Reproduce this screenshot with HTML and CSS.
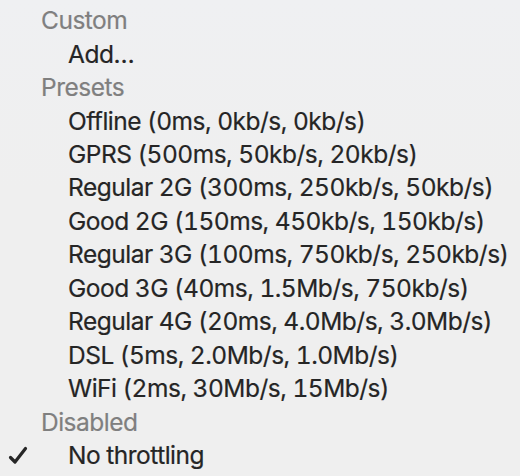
FILE: index.html
```html
<!DOCTYPE html>
<html>
<head>
<meta charset="utf-8">
<link rel="stylesheet" href="styles.css">
</head>
<body>
<div class="menu">
  <div class="row header">Custom</div>
  <div class="row item">Add…</div>
  <div class="row header">Presets</div>
  <div class="row item">Offline (0ms, 0kb/s, 0kb/s)</div>
  <div class="row item">GPRS (500ms, 50kb/s, 20kb/s)</div>
  <div class="row item">Regular 2G (300ms, 250kb/s, 50kb/s)</div>
  <div class="row item">Good 2G (150ms, 450kb/s, 150kb/s)</div>
  <div class="row item">Regular 3G (100ms, 750kb/s, 250kb/s)</div>
  <div class="row item">Good 3G (40ms, 1.5Mb/s, 750kb/s)</div>
  <div class="row item">Regular 4G (20ms, 4.0Mb/s, 3.0Mb/s)</div>
  <div class="row item">DSL (5ms, 2.0Mb/s, 1.0Mb/s)</div>
  <div class="row item">WiFi (2ms, 30Mb/s, 15Mb/s)</div>
  <div class="row header">Disabled</div>
  <div class="row item checked">
    <svg class="check" width="22" height="20" viewBox="0 0 22 20"><path d="M2.5 11.5 L7 16 L17.5 2.5" fill="none" stroke="#262626" stroke-width="3.2" stroke-linecap="round" stroke-linejoin="round"/></svg>
    No throttling
  </div>
</div>
</body>
</html>
```
FILE: styles.css
```css
html, body {
  margin: 0;
  padding: 0;
  background: #efefef;
}
body {
  width: 520px;
  height: 476px;
  overflow: hidden;
}
.menu {
  background: linear-gradient(#eff0f2, #efefef 40%);
  height: 476px;
  padding-top: 3.5px;
  box-sizing: border-box;
  font-family: Inter, "Noto Sans", sans-serif;
  font-size: 24.5px;
  letter-spacing: -0.5px;
  font-feature-settings: "tnum" 1;
  -webkit-text-stroke: 0.2px;
}
.row {
  height: 33.46px;
  display: flex;
  align-items: center;
  white-space: nowrap;
  position: relative;
}
.header {
  padding-left: 41px;
  color: #7f7f7f;
}
.item {
  padding-left: 68px;
  color: #252525;
}
.check {
  position: absolute;
  left: 8px;
  top: 8px;
}
```
